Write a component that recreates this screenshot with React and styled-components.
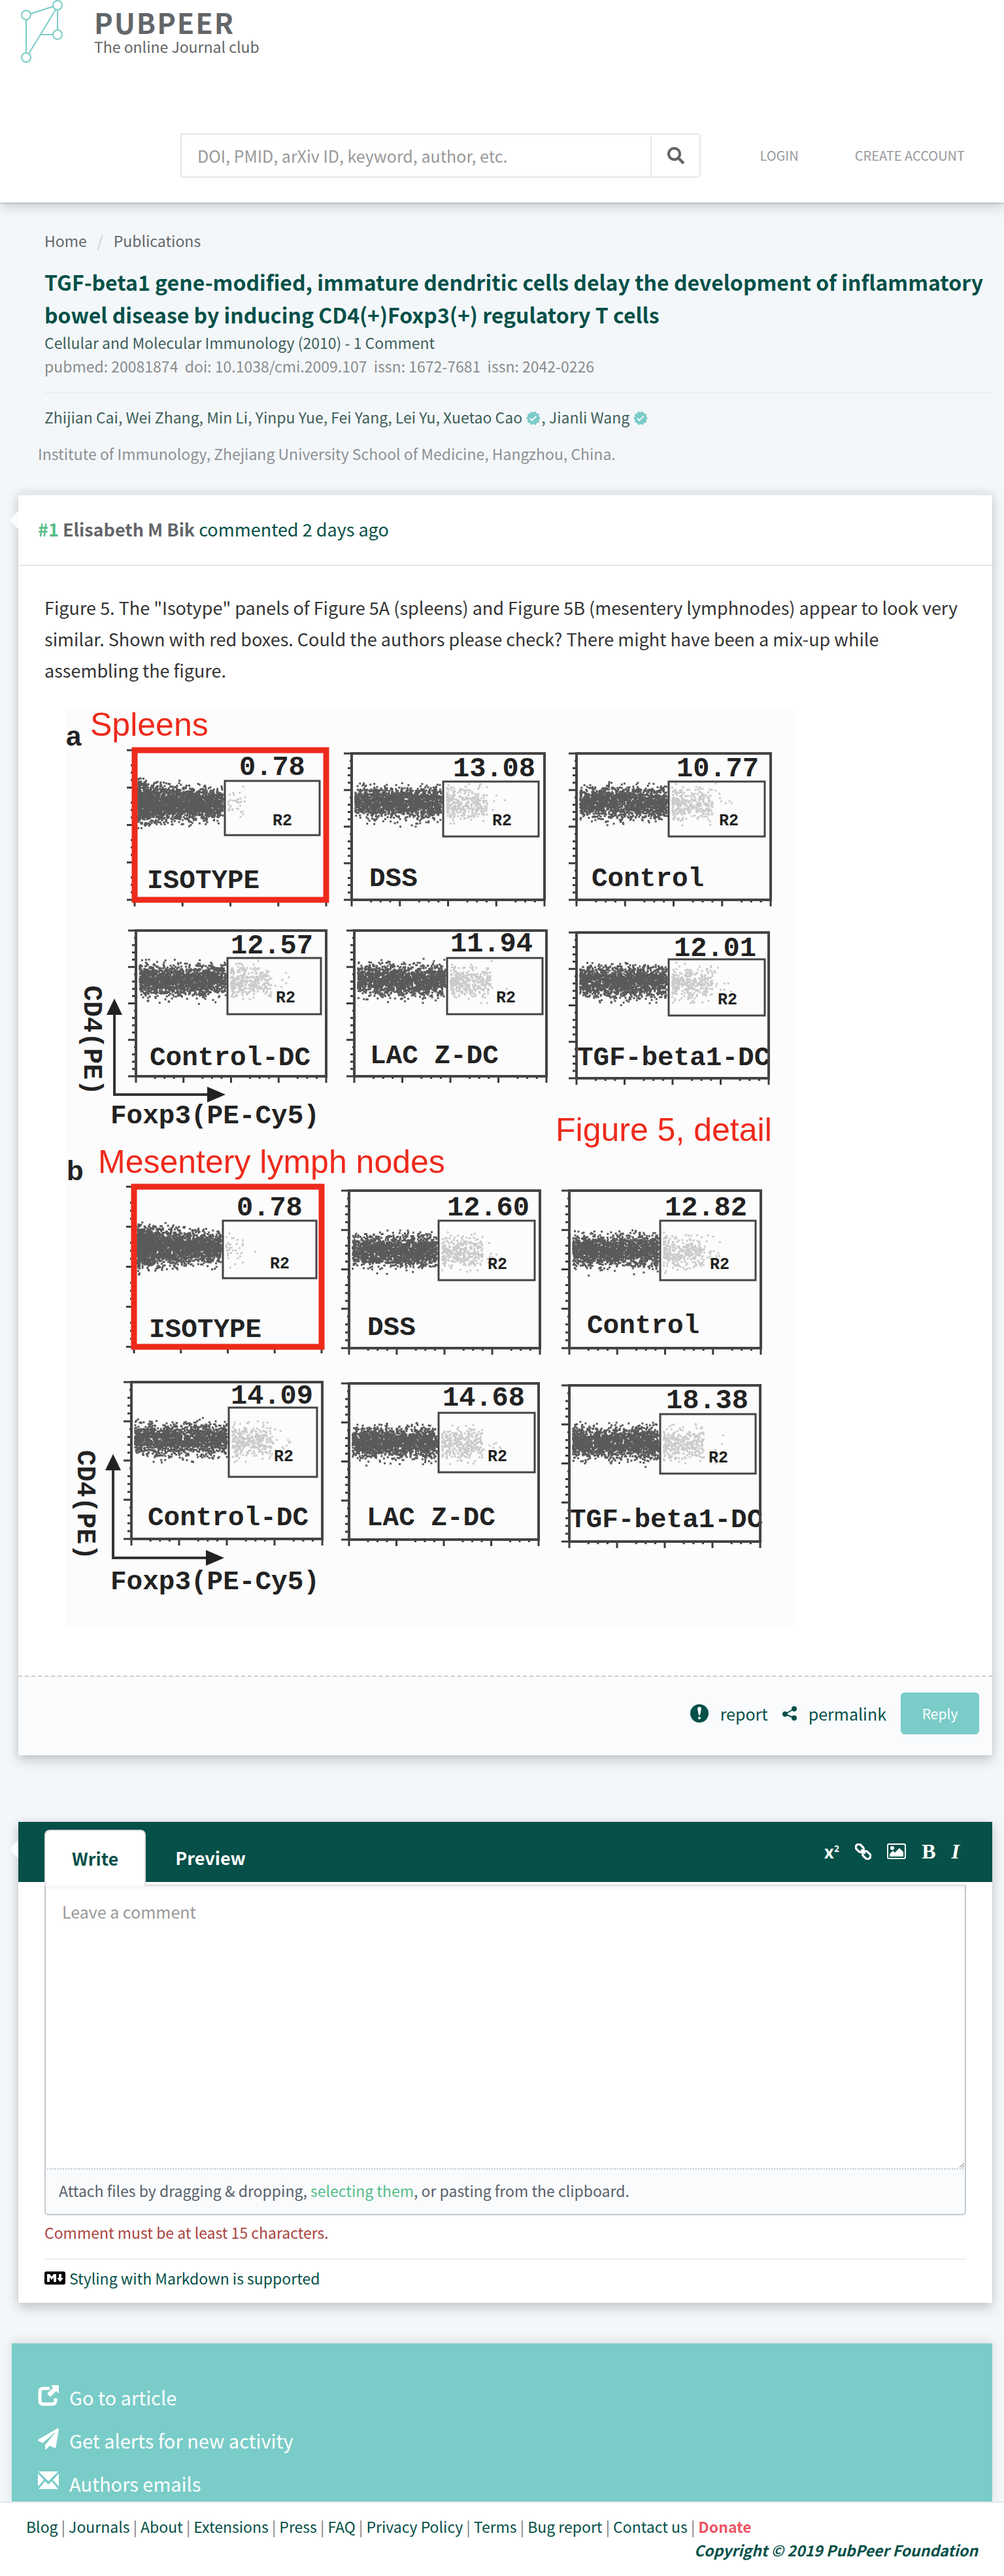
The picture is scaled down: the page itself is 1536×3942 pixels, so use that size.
import React, { useState } from "react";
import styled, { createGlobalStyle, css } from "styled-components";
import { FaPaperPlane, FaSearch } from "react-icons/fa";
import { MdVerified } from "react-icons/md";

const color = {
  page: "#f3f7fa",
  ink: "#333333",
  green: "#055048",
  leaf: "#56bd89",
  teal: "#7accc8",
  slate: "#636669",
  mute: "#8e9093",
  line: "#e4e9ed",
  rule: "#eeeeee",
  panel: "#f9fbfd",
  field: "#c3c8cf",
  red: "#ee2a1c",
};

const GlobalStyle = createGlobalStyle`
  *, *::before, *::after { box-sizing: border-box; }
  body {
    margin: 0;
    background: ${color.page};
    color: ${color.green};
    font-family: "Noto Sans CJK SC", "Noto Sans", sans-serif;
    font-size: 23px;
    line-height: 36px;
  }
  button, input, textarea { font: inherit; color: inherit; }
  a { color: inherit; text-decoration: none; }
  h1, h2, p, ul { margin: 0; padding: 0; }
`;

/* ---------- Header ---------- */

const Header = styled.header`
  position: relative;
  padding-bottom: 38px;
  background: #fff;
  box-shadow: 0 2px 2px rgba(0, 0, 0, 0.14), 0 4px 20px rgba(0, 0, 0, 0.2);
`;

const Brand = styled.a`
  display: flex;
  gap: 48px;
  height: 96px;
  padding-left: 32px;
  color: ${color.slate};
`;

const BrandText = styled.span`
  display: flex;
  flex-direction: column;
  padding-top: 10px;
  line-height: 30px;
`;

const BrandName = styled.strong`
  font-size: 43px;
  line-height: 46px;
  letter-spacing: 2px;
`;

const SearchRow = styled.div`
  display: flex;
  align-items: center;
  margin-top: 108px;
  padding: 0 60px 0 276px;
`;

const SearchForm = styled.form`
  display: flex;
  flex: 1;
  height: 68px;
  margin-right: 90px;
`;

const SearchInput = styled.input`
  flex: 1;
  min-width: 0;
  padding: 0 24px;
  border: 2px solid #e5e5e5;
  border-right: 0;
  border-radius: 4px 0 0 4px;
  background: #fff;
  font-size: 25px;
  &::placeholder { color: #999; opacity: 1; }
`;

const SearchButton = styled.button`
  display: flex;
  align-items: center;
  justify-content: center;
  width: 77px;
  border: 2px solid ${color.line};
  border-radius: 0 6px 6px 0;
  background: #fff;
  color: ${color.slate};
`;

const Account = styled.nav`
  display: flex;
  gap: 86px;
  color: #97999b;
  font-size: 20px;
  text-transform: uppercase;
`;

/* ---------- Publication ---------- */

const Publication = styled.section`
  padding: 40px 18px 42px 68px;
`;

const Breadcrumb = styled.nav`
  display: flex;
  gap: 16px;
  color: ${color.slate};
  i { color: #ccc; font-style: normal; }
`;

const Title = styled.h1`
  margin-top: 20px;
  font-size: 32px;
  line-height: 50px;
`;

const Meta = styled.p`
  color: ${(p) => (p.$soft ? "#8c8c8c" : "#3f5f59")};
  white-space: pre-wrap;
`;

const Rule = styled.hr`
  height: 2px;
  margin: 22px 0 ${(p) => p.$after}px;
  border: 0;
  background: ${color.rule};
`;

const Authors = styled.p`
  color: #3f5f59;
  svg { color: ${color.teal}; vertical-align: -4px; }
`;

const Affiliation = styled.p`
  margin: 20px 0 0 -10px;
  color: ${color.mute};
`;

/* ---------- Cards ---------- */

const Card = styled.article`
  position: relative;
  margin: 0 18px 0 28px;
  background: #fff;
  box-shadow: 0 8px 18px rgba(0, 0, 0, 0.18), 0 0 12px rgba(0, 0, 0, 0.07);
  &::before {
    content: "";
    position: absolute;
    top: 28px;
    left: -14px;
    border: solid transparent;
    border-width: 14px 14px 14px 0;
    border-right-color: #fbfcfd;
  }
`;

const EditorCard = styled(Card).attrs({ as: "section" })`
  margin-top: 102px;
`;

const CommentHead = styled.header`
  padding: 32px 30px 34px;
  border-top: 4px solid #e7eaec;
  border-bottom: 2px solid ${color.line};
  font-size: 27px;
  line-height: 40px;
`;

const CommentNumber = styled.a`
  color: ${color.leaf};
  font-weight: 700;
`;

const CommentAuthor = styled.strong`
  color: ${color.slate};
`;

const CommentBody = styled.div`
  padding: 40px 40px 68px;
  color: ${color.ink};
  font-size: 27px;
  line-height: 48px;
`;

const FigureSvg = styled.svg`
  display: block;
  width: 100%;
  max-width: 1150px;
  height: auto;
  margin-top: 30px;
`;

const CommentFoot = styled.footer`
  display: flex;
  align-items: center;
  justify-content: flex-end;
  gap: 22px;
  padding: 24px 20px 32px;
  border-top: 2px dashed #ccc;
  background: ${color.panel};
  font-size: 25px;
`;

const FootLink = styled.a`
  display: flex;
  align-items: center;
  gap: 18px;
`;

const ReplyButton = styled.button`
  width: 120px;
  height: 64px;
  border: 0;
  border-radius: 6px;
  background: ${color.teal};
  color: #fff;
  font-size: 21px;
`;

/* ---------- Editor ---------- */

const EditorHead = styled.div`
  display: flex;
  align-items: flex-start;
  justify-content: space-between;
  height: 92px;
  padding: 12px 50px 0 40px;
  background: ${color.green};
  color: #fff;
`;

const Tabs = styled.div`
  position: relative;
  display: flex;
`;

const Tab = styled.button`
  height: 86px;
  padding: 0 45px 1px;
  border: 0;
  background: none;
  font-size: 27px;
  font-weight: 700;
  ${(p) =>
    p.$active &&
    css`
      padding: 0 40px 1px;
      border: 2px solid #ddd;
      border-bottom: 0;
      border-radius: 8px 8px 0 0;
      background: #fff;
      color: ${color.green};
    `}
`;

const Toolbar = styled.div`
  display: flex;
  align-items: center;
  gap: 24px;
  height: 66px;
`;

const Tool = styled.button`
  display: flex;
  align-items: center;
  padding: 0;
  border: 0;
  background: none;
`;

const SerifGlyph = styled.span`
  font: 700 32px/24px "Liberation Serif", serif;
  font-style: ${(p) => (p.$italic ? "italic" : "normal")};
`;

const Power = styled.span`
  font-size: 27px;
  font-weight: 700;
  line-height: 24px;
  sup { font-size: 14px; line-height: 0; }
`;

const EditorBody = styled.div`
  padding: 4px 40px 20px;
`;

const CommentField = styled.textarea`
  display: block;
  width: 100%;
  height: 434px;
  padding: 21px 25px;
  border: 2px solid ${color.field};
  border-top-color: #ddd;
  border-bottom: 0;
  background: #fff;
  box-shadow: inset 0 4px 4px rgba(0, 0, 0, 0.05);
  font-size: 25px;
  outline: 0;
  resize: vertical;
  &::placeholder { color: #999; opacity: 1; }
`;

const AttachBar = styled.p`
  padding: 14px 20px 18px;
  border: 2px solid ${color.field};
  border-top-style: dotted;
  border-radius: 0 0 6px 6px;
  background: ${color.panel};
  color: #586069;
  a { color: ${color.leaf}; }
`;

const FieldError = styled.p`
  margin-top: 8px;
  color: #a94442;
`;

const MarkdownHint = styled.a`
  display: flex;
  align-items: center;
  gap: 6px;
`;

/* ---------- Actions and footer ---------- */

const Actions = styled.ul`
  display: flex;
  flex-direction: column;
  gap: 10px;
  margin: 60px 18px 0;
  padding: 54px 40px 0;
  border-top: 2px solid ${color.line};
  background: ${color.teal};
  box-shadow: 0 0 16px rgba(0, 0, 0, 0.12);
  color: #fff;
  font-size: 29px;
  line-height: 56px;
  list-style: none;
`;

const Action = styled.a`
  display: flex;
  gap: 16px;
  svg { flex: none; margin-top: 10px; }
`;

const Footer = styled.footer`
  position: relative;
  padding: 18px 40px 22px;
  border-top: 2px solid ${color.line};
  background: #fff;
`;

const FooterLinks = styled.nav`
  a:last-child { color: #ee5566; font-weight: 700; }
  span { color: #777; }
`;

const Copyright = styled.p`
  font-style: italic;
  font-weight: 700;
  text-align: right;
`;

/* ---------- Drawings ---------- */

const Logo = () => (
  <svg width="64" height="96" viewBox="0 0 64 96" fill="none" stroke={color.teal} strokeWidth="2" aria-hidden="true">
    <circle cx="8" cy="23" r="7" />
    <circle cx="56" cy="8" r="7" />
    <circle cx="56" cy="53" r="7" />
    <circle cx="8" cy="88" r="7" />
    <path d="M8 30V81M15 21L49 10M56 15V46M53 15L12 82M30 53H49" />
  </svg>
);

const ReportIcon = () => (
  <svg width="28" height="30" viewBox="0 0 28 30" aria-hidden="true">
    <circle cx="14" cy="15" r="14" fill={color.green} />
    <path d="M11 8q0-3 3-3t3 3l-2 10h-2z" fill="#fff" />
    <circle cx="14" cy="22" r="2" fill="#fff" />
  </svg>
);

const ShareIcon = () => (
  <svg width="22" height="22" viewBox="0 0 22 22" fill={color.green} aria-hidden="true">
    <circle cx="4" cy="12" r="4" />
    <circle cx="18" cy="4" r="4" />
    <circle cx="18" cy="18" r="4" />
    <path d="M18 4L4 12L18 18" fill="none" stroke={color.green} strokeWidth="2" />
  </svg>
);

const LinkIcon = () => (
  <svg width="25" height="25" viewBox="0 0 25 25" fill="none" stroke="currentColor" strokeWidth="3.4" aria-hidden="true">
    <g transform="rotate(45 12.5 12.5)">
      <rect x="-1.5" y="8" width="13" height="9" rx="4" />
      <rect x="13.5" y="8" width="13" height="9" rx="4" />
      <path d="M8 12.5H17" strokeWidth="2.6" />
    </g>
  </svg>
);

const ImageIcon = () => (
  <svg width="29" height="24" viewBox="0 0 29 24" fill="currentColor" aria-hidden="true">
    <rect x="1" y="1" width="27" height="22" rx="2" fill="none" stroke="currentColor" strokeWidth="2" />
    <circle cx="8" cy="7" r="3" />
    <path d="M4 20V16L9 11L12 14L19 7L25 13V20Z" />
  </svg>
);

const MarkdownIcon = () => (
  <svg width="32" height="20" viewBox="0 0 32 20" aria-hidden="true">
    <rect width="32" height="20" rx="3" />
    <path d="M4 16V4H8L11 8L14 4H18V16H14V9L11 13L8 9V16ZM22 4H26V10H29L24 16L19 10H22Z" fill="#fff" />
  </svg>
);

const ShareBoxIcon = () => (
  <svg width="32" height="32" viewBox="0 0 32 32" aria-hidden="true">
    <path d="M18 5H8Q3 5 3 10V24Q3 29 8 29H22Q27 29 27 24V20" fill="none" stroke="#fff" strokeWidth="5" />
    <path d="M20 0H32V13L28 9L19 18L14 13L23 4Z" fill="#fff" />
  </svg>
);

const EnvelopeIcon = () => (
  <svg width="32" height="27" viewBox="0 0 32 27" fill="#fff" aria-hidden="true">
    <path d="M1 0H31L16 15ZM0 3L9 13L0 23ZM32 3L23 13L32 23ZM1 27L11 15L16 20L21 15L31 27Z" />
  </svg>
);

/* ---------- Flow cytometry figure ---------- */

const panels = [
  { box: [138, 68, 431, 297], gate: [276, 115, 421, 198], value: ["0.78", 298, 106], name: ["ISOTYPE", 157, 279], r2: [349, 183], cy: 147, red: true },
  { box: [470, 73, 765, 297], gate: [610, 116, 756, 200], value: ["13.08", 625, 108], name: ["DSS", 497, 276], r2: [685, 183], cy: 145 },
  { box: [814, 73, 1111, 297], gate: [955, 116, 1102, 200], value: ["10.77", 967, 108], name: ["Control", 837, 276], r2: [1032, 183], cy: 145 },
  { box: [140, 344, 431, 567], gate: [280, 386, 423, 472], value: ["12.57", 285, 379], name: ["Control-DC", 161, 550], r2: [354, 454], cy: 417 },
  { box: [474, 344, 768, 567], gate: [616, 386, 762, 472], value: ["11.94", 621, 376], name: ["LAC Z-DC", 498, 547], r2: [691, 454], cy: 417 },
  { box: [814, 347, 1108, 570], gate: [955, 388, 1102, 474], value: ["12.01", 963, 383], name: ["TGF-beta1-DC", 815, 550], r2: [1030, 457], cy: 419 },
  { box: [137, 736, 424, 981], gate: [273, 788, 416, 876], value: ["0.78", 294, 780], name: ["ISOTYPE", 160, 966], r2: [345, 861], cy: 826, red: true },
  { box: [466, 742, 758, 983], gate: [603, 788, 750, 879], value: ["12.60", 616, 780], name: ["DSS", 494, 963], r2: [678, 862], cy: 831 },
  { box: [803, 742, 1096, 983], gate: [942, 788, 1088, 879], value: ["12.82", 949, 780], name: ["Control", 830, 960], r2: [1018, 862], cy: 831 },
  { box: [133, 1035, 425, 1275], gate: [282, 1074, 417, 1180], value: ["14.09", 285, 1068], name: ["Control-DC", 158, 1254], r2: [351, 1156], cy: 1120 },
  { box: [466, 1037, 756, 1276], gate: [603, 1082, 750, 1173], value: ["14.68", 609, 1071], name: ["LAC Z-DC", 493, 1254], r2: [678, 1156], cy: 1124 },
  { box: [803, 1040, 1095, 1279], gate: [942, 1084, 1088, 1175], value: ["18.38", 951, 1075], name: ["TGF-beta1-DC", 804, 1257], r2: [1016, 1158], cy: 1125 },
];

const makeRandom = (seed) => () => {
  seed = (seed * 16807) % 2147483647;
  return seed / 2147483647;
};

const dot = (x, y) => `M${x.toFixed(1)} ${y.toFixed(1)}h3v3h-3z`;

function scatter(panel, index) {
  const random = makeRandom(7919 * (index + 3));
  const bell = () => random() + random() + random() - 1.5;
  const left = panel.box[0] + 4;
  const span = panel.gate[0] - left;
  let dark = "";
  let light = "";
  const core = panel.red ? 2400 : 1500;
  for (let i = 0; i < core; i += 1) {
    const t = panel.red ? random() ** 1.5 : random() ** 1.1;
    dark += dot(left + t * (span - 4), panel.cy + bell() * (panel.red ? 30 - 10 * t : 22));
  }
  for (let i = 0; i < 260; i += 1) {
    dark += dot(left + 6 + random() ** 0.8 * (span - 10), panel.cy + 10 + bell() * 22);
  }
  const faint = panel.red ? 34 : 330;
  for (let i = 0; i < faint; i += 1) {
    const reach = panel.red ? 26 : 62;
    const x = panel.gate[0] + 4 + random() ** 1.3 * reach + (random() > 0.95 ? 30 : 0);
    light += dot(x, panel.cy + 4 + bell() * 24);
  }
  return { dark, light };
}

const clouds = panels.map(scatter);

function ticks([x0, y0, x1, y1]) {
  let d = "";
  for (let i = 0; i <= 20; i += 1) {
    const long = i % 5 === 0 ? 12 : i % 5 === 1 ? 3 : 6;
    d += `M${x0} ${y0 + ((y1 - y0) * i) / 20}h${-long}`;
    d += `M${x0 + ((x1 - x0) * i) / 20} ${y1}v${long - 2}`;
  }
  return d;
}

const Mono = styled.text`
  fill: #222;
  font: 700 ${(p) => p.$size || 41}px "Liberation Mono", monospace;
`;

const Heading = styled.text`
  fill: ${color.red};
  font: 50px "Liberation Sans", sans-serif;
`;

const Letter = styled.text`
  fill: #222;
  font: 700 42px "Liberation Sans", sans-serif;
`;

function Panel({ panel, cloud }) {
  const [x0, y0, x1, y1] = panel.box;
  const [gx0, gy0, gx1, gy1] = panel.gate;
  const [value, vx, vy] = panel.value;
  const [name, nx, ny] = panel.name;
  return (
    <g>
      <path d={ticks(panel.box)} stroke="#3a3a3a" strokeWidth="3" />
      <path d={cloud.dark} fill="#5a5a5a" />
      <path d={cloud.light} fill="#cbcbcb" />
      <rect x={gx0} y={gy0} width={gx1 - gx0} height={gy1 - gy0} fill="none" stroke="#444" strokeWidth="3" />
      <Mono x={vx} y={vy} $size={42}>{value}</Mono>
      <Mono x={nx} y={ny}>{name}</Mono>
      <Mono x={panel.r2[0]} y={panel.r2[1]} $size={25}>R2</Mono>
      <rect
        x={x0}
        y={y0}
        width={x1 - x0}
        height={y1 - y0}
        fill="none"
        stroke={panel.red ? color.red : "#444"}
        strokeWidth={panel.red ? 9 : 4}
      />
    </g>
  );
}

function Axes({ x, y, top, textX, textY, labelY }) {
  return (
    <g>
      <path d={`M${x} ${top + 20}V${y}H${x + 146}`} fill="none" stroke="#333" strokeWidth="4" />
      <path d={`M${x} ${top}l12 25h-24zM${x + 170} ${y}l-28 -12v24z`} fill="#222" />
      <Mono transform={`translate(${textX} ${textY}) rotate(90)`} $size={40}>CD4(PE)</Mono>
      <Mono x="101" y={labelY}>Foxp3(PE-Cy5)</Mono>
    </g>
  );
}

const CytometryFigure = () => (
  <FigureSvg viewBox="0 0 1150 1416" role="img" aria-label="Figure 5, detail">
    <rect x="33" y="6" width="1115" height="1406" fill="#fcfcfc" />
    {panels.map((panel, i) => (
      <Panel key={i} panel={panel} cloud={clouds[i]} />
    ))}
    <Axes x={107} y={595} top={448} textX={61} textY={428} labelY={639} />
    <Axes x={105} y={1304} top={1145} textX={51} textY={1139} labelY={1352} />
    <Letter x="33" y="61">a</Letter>
    <Heading x="70" y="46">Spleens</Heading>
    <Letter x="34" y="726">b</Letter>
    <Heading x="82" y="715">Mesentery lymph nodes</Heading>
    <Heading x="782" y="666">Figure 5, detail</Heading>
  </FigureSvg>
);

/* ---------- Page ---------- */

const footerLinks = [
  "Blog", "Journals", "About", "Extensions", "Press", "FAQ",
  "Privacy Policy", "Terms", "Bug report", "Contact us", "Donate",
];

export default function App() {
  const [tab, setTab] = useState("Write");
  return (
    <>
      <GlobalStyle />
      <Header>
        <Brand href="#">
          <Logo />
          <BrandText>
            <BrandName>PUBPEER</BrandName>
            <span>The online Journal club</span>
          </BrandText>
        </Brand>
        <SearchRow>
          <SearchForm role="search" onSubmit={(e) => e.preventDefault()}>
            <SearchInput type="text" aria-label="Search publications" placeholder="DOI, PMID, arXiv ID, keyword, author, etc." />
            <SearchButton type="submit" aria-label="Search">
              <FaSearch size={26} />
            </SearchButton>
          </SearchForm>
          <Account>
            <a href="#">Login</a>
            <a href="#">Create account</a>
          </Account>
        </SearchRow>
      </Header>

      <main>
        <Publication>
          <Breadcrumb aria-label="Breadcrumb">
            <a href="#">Home</a>
            <i>/</i>
            <a href="#">Publications</a>
          </Breadcrumb>
          <Title>
            TGF-beta1 gene-modified, immature dendritic cells delay the development of inflammatory bowel disease by
            inducing CD4(+)Foxp3(+) regulatory T cells
          </Title>
          <Meta>Cellular and Molecular Immunology (2010) - 1 Comment</Meta>
          <Meta $soft>{"pubmed: 20081874  doi: 10.1038/cmi.2009.107  issn: 1672-7681  issn: 2042-0226"}</Meta>
          <Rule $after={18} />
          <Authors>
            Zhijian Cai, Wei Zhang, Min Li, Yinpu Yue, Fei Yang, Lei Yu, Xuetao Cao <MdVerified size={24} />, Jianli
            Wang <MdVerified size={24} />
          </Authors>
          <Affiliation>
            Institute of Immunology, Zhejiang University School of Medicine, Hangzhou, China.
          </Affiliation>
        </Publication>

        <Card>
          <CommentHead>
            <CommentNumber href="#1">#1</CommentNumber> <CommentAuthor>Elisabeth M Bik</CommentAuthor> commented 2 days ago
          </CommentHead>
          <CommentBody>
            <p>
              Figure 5. The "Isotype" panels of Figure 5A (spleens) and Figure 5B (mesentery lymphnodes) appear to look
              very similar. Shown with red boxes. Could the authors please check? There might have been a mix-up while
              assembling the figure.
            </p>
            <CytometryFigure />
          </CommentBody>
          <CommentFoot>
            <FootLink href="#">
              <ReportIcon />
              report
            </FootLink>
            <FootLink href="#">
              <ShareIcon />
              permalink
            </FootLink>
            <ReplyButton type="button">Reply</ReplyButton>
          </CommentFoot>
        </Card>

        <EditorCard>
          <EditorHead>
            <Tabs role="tablist">
              {["Write", "Preview"].map((name) => (
                <Tab key={name} type="button" role="tab" aria-selected={tab === name} $active={tab === name} onClick={() => setTab(name)}>
                  {name}
                </Tab>
              ))}
            </Tabs>
            <Toolbar>
              <Tool type="button" aria-label="Superscript"><Power>x<sup>2</sup></Power></Tool>
              <Tool type="button" aria-label="Link"><LinkIcon /></Tool>
              <Tool type="button" aria-label="Image"><ImageIcon /></Tool>
              <Tool type="button" aria-label="Bold"><SerifGlyph>B</SerifGlyph></Tool>
              <Tool type="button" aria-label="Italic"><SerifGlyph $italic>I</SerifGlyph></Tool>
            </Toolbar>
          </EditorHead>
          <EditorBody>
            <CommentField aria-label="Comment" placeholder="Leave a comment" />
            <AttachBar>
              Attach files by dragging &amp; dropping, <a href="#">selecting them</a>, or pasting from the clipboard.
            </AttachBar>
            <FieldError>Comment must be at least 15 characters.</FieldError>
            <Rule $after={10} />
            <MarkdownHint href="#">
              <MarkdownIcon />
              Styling with Markdown is supported
            </MarkdownHint>
          </EditorBody>
        </EditorCard>

        <Actions>
          <li><Action href="#"><ShareBoxIcon />Go to article</Action></li>
          <li><Action href="#"><FaPaperPlane size={32} />Get alerts for new activity</Action></li>
          <li><Action href="#"><EnvelopeIcon />Authors emails</Action></li>
        </Actions>
      </main>

      <Footer>
        <FooterLinks>
          {footerLinks.map((name, i) => (
            <React.Fragment key={name}>
              {i > 0 && <span> | </span>}
              <a href="#">{name}</a>
            </React.Fragment>
          ))}
        </FooterLinks>
        <Copyright>Copyright © 2019 PubPeer Foundation</Copyright>
      </Footer>
    </>
  );
}
